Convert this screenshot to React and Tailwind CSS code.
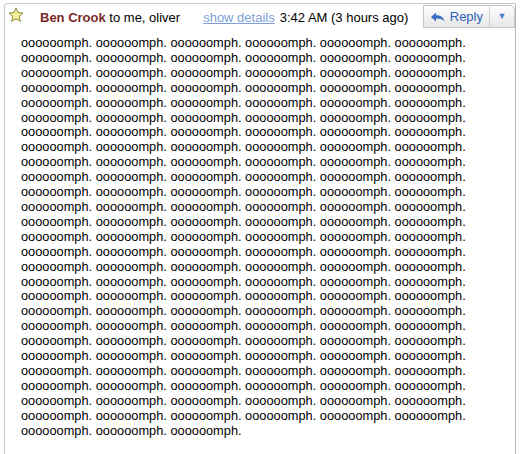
import React from 'react';

const words = Array.from({ length: 159 }, () => 'oooooomph.').join(' ');

function Star() {
  return (
    <svg width="16" height="16" viewBox="0 0 16 16">
      <path
        d="M8 1 L10 5.6 L15 6 L11.2 9.3 L12.4 14.3 L8 11.7 L3.6 14.3 L4.8 9.3 L1 6 L6 5.6 Z"
        fill="#f4f39a"
        stroke="#8a8840"
        strokeWidth="1"
        strokeLinejoin="round"
      />
    </svg>
  );
}

function ReplyArrow() {
  return (
    <svg width="16" height="12" viewBox="0 0 16 12">
      <path d="M1 6 L6 1.5 L6 4.2 C10.5 4.2 13.5 6 14.5 10.5 C12.5 8 10 7.4 6 7.4 L6 10.5 Z" fill="#3b6fc4" />
    </svg>
  );
}

export default function App() {
  return (
    <div className="w-[520px] h-[454px] bg-white pt-[3px] pl-[4px] pr-[4px] font-['Liberation_Sans',Arial,sans-serif] text-[13px] text-black overflow-hidden">
      <div className="h-full border border-b-0 border-[#c8c8c8] border-r-[#b8b8b8] rounded-tl-[4px]">
        {/* Header */}
        <div className="flex items-start h-[26px]">
          <div className="pl-[3px] pt-[3px] w-[35px]">
            <Star />
          </div>
          <div className="pt-[4px] flex-1 whitespace-nowrap">
            <span className="font-bold text-[#7a2a2a]">Ben Crook</span>
            <span> to me, oliver</span>
            <span className="ml-[23px] text-[#7c9fd9] underline">show details</span>
            <span className="ml-[5px]">3:42 AM (3 hours ago)</span>
          </div>
          <div className="mt-[1px] flex h-[23px] border border-[#c6c6c6] rounded-tr-[5px] bg-gradient-to-b from-white to-[#e6e6e6]">
            <div className="flex items-center gap-[4px] pl-[6px] pr-[6px] border-r border-[#d0d0d0] text-[#2d5fb5]">
              <ReplyArrow />
              <span>Reply</span>
            </div>
            <div className="w-[24px] flex items-center justify-center text-[#4a7fd0] text-[9px]">▼</div>
          </div>
        </div>
        {/* Body */}
        <div className="pl-[16px] pr-[30px] pt-[6px] text-[12.8px] leading-[14.9px]">
          {words}
        </div>
      </div>
    </div>
  );
}
